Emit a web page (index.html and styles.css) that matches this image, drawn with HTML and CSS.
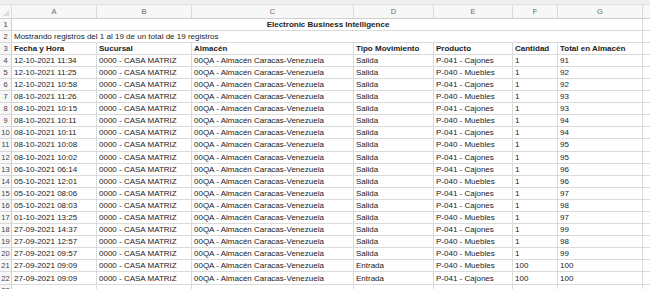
FILE: index.html
```html
<!DOCTYPE html>
<html lang="es">
<head>
<meta charset="utf-8">
<title>Electronic Business Intelligence</title>
<link rel="stylesheet" href="styles.css">
</head>
<body>
<div class="strip"></div>
<div class="sheet">
  <div class="hd corner"><span class="tri"></span></div>
  <div class="hd">A</div><div class="hd">B</div><div class="hd">C</div><div class="hd">D</div><div class="hd">E</div><div class="hd">F</div><div class="hd">G</div><div class="hd fill"></div>

  <div class="rn">1</div><div class="c span title">Electronic Business Intelligence</div><div class="c fill"></div>
  <div class="rn">2</div><div class="c span">Mostrando registros del 1 al 19 de un total de 19 registros</div><div class="c fill"></div>
  <div class="rn">3</div><div class="c b">Fecha y Hora</div><div class="c b">Sucursal</div><div class="c b">Almacén</div><div class="c b">Tipo Movimiento</div><div class="c b">Producto</div><div class="c b">Cantidad</div><div class="c b">Total en Almacén</div><div class="c fill"></div>

  <div class="rn">4</div><div class="c">12-10-2021 11:34</div><div class="c">0000 - CASA MATRIZ</div><div class="c">00QA - Almacén Caracas-Venezuela</div><div class="c">Salida</div><div class="c">P-041 - Cajones</div><div class="c">1</div><div class="c">91</div><div class="c fill"></div>
  <div class="rn">5</div><div class="c">12-10-2021 11:25</div><div class="c">0000 - CASA MATRIZ</div><div class="c">00QA - Almacén Caracas-Venezuela</div><div class="c">Salida</div><div class="c">P-040 - Muebles</div><div class="c">1</div><div class="c">92</div><div class="c fill"></div>
  <div class="rn">6</div><div class="c">12-10-2021 10:58</div><div class="c">0000 - CASA MATRIZ</div><div class="c">00QA - Almacén Caracas-Venezuela</div><div class="c">Salida</div><div class="c">P-041 - Cajones</div><div class="c">1</div><div class="c">92</div><div class="c fill"></div>
  <div class="rn">7</div><div class="c">08-10-2021 11:26</div><div class="c">0000 - CASA MATRIZ</div><div class="c">00QA - Almacén Caracas-Venezuela</div><div class="c">Salida</div><div class="c">P-040 - Muebles</div><div class="c">1</div><div class="c">93</div><div class="c fill"></div>
  <div class="rn">8</div><div class="c">08-10-2021 10:15</div><div class="c">0000 - CASA MATRIZ</div><div class="c">00QA - Almacén Caracas-Venezuela</div><div class="c">Salida</div><div class="c">P-041 - Cajones</div><div class="c">1</div><div class="c">93</div><div class="c fill"></div>
  <div class="rn">9</div><div class="c">08-10-2021 10:11</div><div class="c">0000 - CASA MATRIZ</div><div class="c">00QA - Almacén Caracas-Venezuela</div><div class="c">Salida</div><div class="c">P-040 - Muebles</div><div class="c">1</div><div class="c">94</div><div class="c fill"></div>
  <div class="rn">10</div><div class="c">08-10-2021 10:11</div><div class="c">0000 - CASA MATRIZ</div><div class="c">00QA - Almacén Caracas-Venezuela</div><div class="c">Salida</div><div class="c">P-041 - Cajones</div><div class="c">1</div><div class="c">94</div><div class="c fill"></div>
  <div class="rn">11</div><div class="c">08-10-2021 10:08</div><div class="c">0000 - CASA MATRIZ</div><div class="c">00QA - Almacén Caracas-Venezuela</div><div class="c">Salida</div><div class="c">P-040 - Muebles</div><div class="c">1</div><div class="c">95</div><div class="c fill"></div>
  <div class="rn">12</div><div class="c">08-10-2021 10:02</div><div class="c">0000 - CASA MATRIZ</div><div class="c">00QA - Almacén Caracas-Venezuela</div><div class="c">Salida</div><div class="c">P-041 - Cajones</div><div class="c">1</div><div class="c">95</div><div class="c fill"></div>
  <div class="rn">13</div><div class="c">06-10-2021 06:14</div><div class="c">0000 - CASA MATRIZ</div><div class="c">00QA - Almacén Caracas-Venezuela</div><div class="c">Salida</div><div class="c">P-041 - Cajones</div><div class="c">1</div><div class="c">96</div><div class="c fill"></div>
  <div class="rn">14</div><div class="c">05-10-2021 12:01</div><div class="c">0000 - CASA MATRIZ</div><div class="c">00QA - Almacén Caracas-Venezuela</div><div class="c">Salida</div><div class="c">P-040 - Muebles</div><div class="c">1</div><div class="c">96</div><div class="c fill"></div>
  <div class="rn">15</div><div class="c">05-10-2021 08:06</div><div class="c">0000 - CASA MATRIZ</div><div class="c">00QA - Almacén Caracas-Venezuela</div><div class="c">Salida</div><div class="c">P-041 - Cajones</div><div class="c">1</div><div class="c">97</div><div class="c fill"></div>
  <div class="rn">16</div><div class="c">05-10-2021 08:03</div><div class="c">0000 - CASA MATRIZ</div><div class="c">00QA - Almacén Caracas-Venezuela</div><div class="c">Salida</div><div class="c">P-041 - Cajones</div><div class="c">1</div><div class="c">98</div><div class="c fill"></div>
  <div class="rn">17</div><div class="c">01-10-2021 13:25</div><div class="c">0000 - CASA MATRIZ</div><div class="c">00QA - Almacén Caracas-Venezuela</div><div class="c">Salida</div><div class="c">P-040 - Muebles</div><div class="c">1</div><div class="c">97</div><div class="c fill"></div>
  <div class="rn">18</div><div class="c">27-09-2021 14:37</div><div class="c">0000 - CASA MATRIZ</div><div class="c">00QA - Almacén Caracas-Venezuela</div><div class="c">Salida</div><div class="c">P-041 - Cajones</div><div class="c">1</div><div class="c">99</div><div class="c fill"></div>
  <div class="rn">19</div><div class="c">27-09-2021 12:57</div><div class="c">0000 - CASA MATRIZ</div><div class="c">00QA - Almacén Caracas-Venezuela</div><div class="c">Salida</div><div class="c">P-040 - Muebles</div><div class="c">1</div><div class="c">98</div><div class="c fill"></div>
  <div class="rn">20</div><div class="c">27-09-2021 09:57</div><div class="c">0000 - CASA MATRIZ</div><div class="c">00QA - Almacén Caracas-Venezuela</div><div class="c">Salida</div><div class="c">P-040 - Muebles</div><div class="c">1</div><div class="c">99</div><div class="c fill"></div>
  <div class="rn">21</div><div class="c">27-09-2021 09:09</div><div class="c">0000 - CASA MATRIZ</div><div class="c">00QA - Almacén Caracas-Venezuela</div><div class="c">Entrada</div><div class="c">P-040 - Muebles</div><div class="c">100</div><div class="c">100</div><div class="c fill"></div>
  <div class="rn">22</div><div class="c">27-09-2021 09:09</div><div class="c">0000 - CASA MATRIZ</div><div class="c">00QA - Almacén Caracas-Venezuela</div><div class="c">Entrada</div><div class="c">P-041 - Cajones</div><div class="c">100</div><div class="c">100</div><div class="c fill"></div>
  <div class="rn">23</div><div class="c"></div><div class="c"></div><div class="c"></div><div class="c"></div><div class="c"></div><div class="c"></div><div class="c"></div><div class="c fill"></div>
</div>
</body>
</html>
```

FILE: styles.css
```css
html, body {
  margin: 0;
  padding: 0;
  background: #ffffff;
  overflow: hidden;
}
body {
  font-family: "Liberation Sans", Arial, sans-serif;
  font-size: 8px;
  color: #222222;
}
.strip {
  height: 4px;
  background: #f0f0f0;
  border-bottom: 1px solid #e2e2e2;
}
.sheet {
  display: grid;
  grid-template-columns: 12px 85px 95px 162px 80px 79px 45px 85px 1fr;
  grid-template-rows: 13.5px;
  grid-auto-rows: 12.1px;
}
.sheet > div {
  box-sizing: border-box;
  border-right: 1px solid #dadada;
  border-bottom: 1px solid #dadada;
  white-space: nowrap;
  overflow: hidden;
  display: flex;
  align-items: center;
}
.hd {
  background: #f7f7f7;
  color: #6a6a6a;
  justify-content: center;
  font-size: 7.5px;
  border-bottom-color: #cfcfcf !important;
}
.corner {
  position: relative;
}
.tri {
  position: absolute;
  right: 2px;
  bottom: 2px;
  width: 0;
  height: 0;
  border-left: 6px solid transparent;
  border-bottom: 6px solid #dcdcdc;
}
.rn {
  background: #f7f7f7;
  color: #444444;
  justify-content: center;
  font-size: 7.5px;
  border-right-color: #cfcfcf !important;
}
.c {
  padding-left: 2px;
}
.fill {
  border-right: none !important;
}
.span {
  grid-column: span 7;
}
.title {
  justify-content: center;
  font-weight: bold;
}
.b {
  font-weight: bold;
}
```
